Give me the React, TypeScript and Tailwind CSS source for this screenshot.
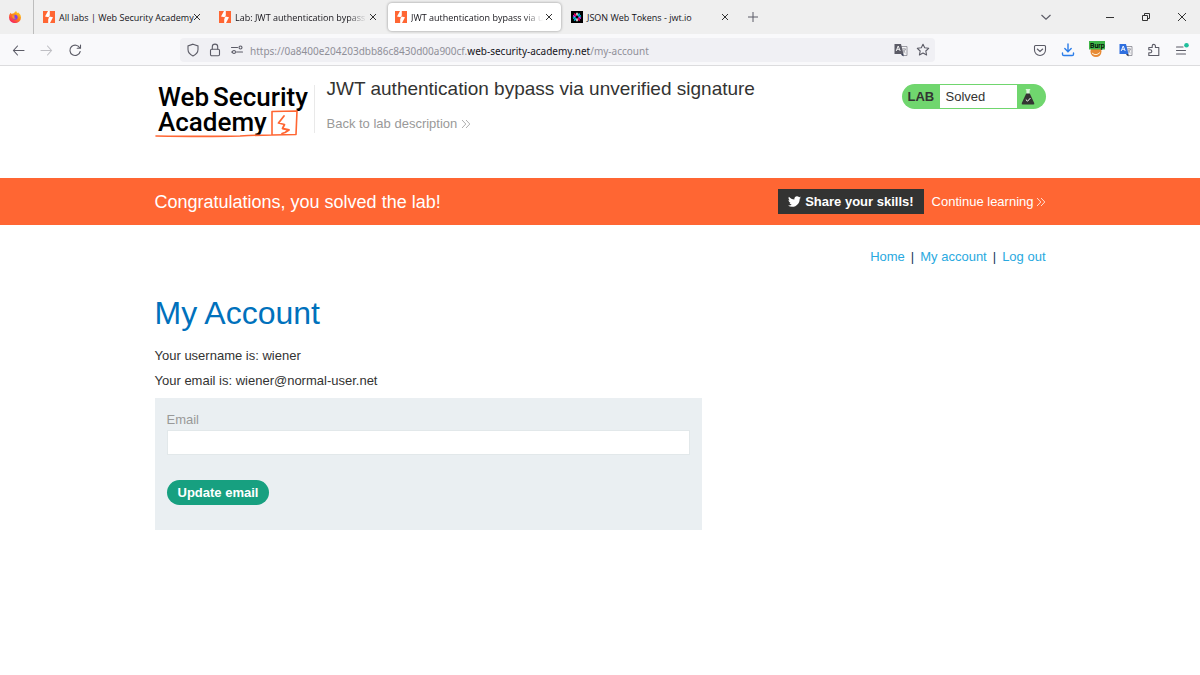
import { useState, type ReactNode } from "react";
import { FaTwitter } from "react-icons/fa";

type Tab = {
  title: string;
  icon: "lab" | "jwt";
  active?: boolean;
  fade?: boolean;
};

const TABS: Tab[] = [
  { title: "All labs | Web Security Academy", icon: "lab" },
  { title: "Lab: JWT authentication bypass", icon: "lab", fade: true },
  { title: "JWT authentication bypass via u", icon: "lab", active: true, fade: true },
  { title: "JSON Web Tokens - jwt.io", icon: "jwt" },
];

const ACCOUNT_LINKS = ["Home", "My account", "Log out"];

export default function App() {
  return (
    <div className="min-h-screen bg-white font-['Liberation_Sans',Arial,sans-serif] text-[13px] leading-5 text-[#333332]">
      <BrowserChrome />
      <LabHeader />
      <SolvedBanner />
      <AccountPage />
    </div>
  );
}

function BrowserChrome() {
  return (
    <header className="font-['Open_Sans','Noto_Sans',sans-serif] text-[#5b5b66]">
      <div className="flex h-[34px] items-stretch bg-[#efefef]">
        <div className="flex w-[34px] shrink-0 items-center justify-center border-r border-[#bdbdbd] pr-1">
          <FirefoxIcon />
        </div>
        {TABS.map((tab) => (
          <BrowserTab key={tab.title} tab={tab} />
        ))}
        <ChromeButton label="New tab" className="ml-[9px]">
          <path d="M6 1v10M1 6h10" />
        </ChromeButton>
        <div className="ml-auto flex items-center gap-6 pr-3">
          <ChromeButton label="List all tabs" className="mr-7">
            <path d="M1.500 4 6 8.200 10.500 4" strokeWidth="1.200" />
          </ChromeButton>
          <ChromeButton label="Minimize">
            <path d="M2 6.500h8" stroke="#333" />
          </ChromeButton>
          <ChromeButton label="Restore">
            <path d="M2.500 4.500h5v5h-5zM4.500 4.500v-2h5v5h-2" stroke="#333" />
          </ChromeButton>
          <ChromeButton label="Close window">
            <path d="m2 2 8 8M10 2l-8 8" stroke="#333" />
          </ChromeButton>
        </div>
      </div>

      <div className="flex h-8 items-center border-b border-[#dcdcde] bg-[#f9f9fb] pr-[11px] pl-3">
        <div className="flex w-[168px] shrink-0 items-center gap-3.5">
          <ToolButton label="Back">
            <path d="M12 7.500H1.500M5.500 3 1.500 7.500l4 4.500" />
          </ToolButton>
          <ToolButton label="Forward">
            <path d="M1 7.500h10.500M7.500 3l4 4.500-4 4.500" stroke="#bfbfc4" />
          </ToolButton>
          <ToolButton label="Reload">
            <path d="M11.800 5A5.200 5.200 0 1 0 12.200 8.500M12.500 2v3.300H9.200" />
          </ToolButton>
        </div>
        <div className="flex h-6 min-w-0 flex-1 items-center rounded bg-[#f0f0f4] pr-[5px] pl-1.5">
          <div className="flex shrink-0 gap-2">
            <ToolButton label="Tracking protection">
              <path d="M7 1.200 12 3v3.500c0 3-2 5-5 6.500-3-1.500-5-3.500-5-6.500V3z" />
            </ToolButton>
            <ToolButton label="Connection secure">
              <rect x="2.500" y="6.200" width="9" height="6.500" rx="1.200" />
              <path d="M4.300 6V3.800a2.700 2.700 0 0 1 5.400 0V6" />
            </ToolButton>
            <ToolButton label="Permissions">
              <path d="M1.500 4.500h6M6.500 9h6M1.500 9h1" />
              <circle cx="10.500" cy="4.500" r="1.500" />
              <circle cx="4" cy="9" r="1.500" />
            </ToolButton>
          </div>
          <p className="mt-0.5 ml-1.5 flex-1 truncate font-['Noto_Sans','Open_Sans',sans-serif] text-[10px] leading-4 text-[#8f8f98]">
            https://0a8400e204203dbb86c8430d00a900cf.
            <span className="text-[#15141a]">web-security-academy.net</span>/my-account
          </p>
          <div className="flex shrink-0 gap-2">
            <button aria-label="Translate page">
              <TranslateIcon color="#5b5b66" />
            </button>
            <ToolButton label="Bookmark">
              <path
                d="m7 1.200 1.700 3.600 4 .5-2.900 2.700.8 4L7 10.100 3.400 12l.8-4-2.900-2.700 4-.5z"
                strokeLinejoin="round"
              />
            </ToolButton>
          </div>
        </div>
        <div className="ml-[98px] flex shrink-0 items-center gap-3.5">
          <ToolButton label="Save to Pocket">
            <path d="M2.500 2.500h9a1 1 0 0 1 1 1V7a5.500 5.500 0 0 1-11 0V3.500a1 1 0 0 1 1-1zM4.300 6 7 8.500 9.700 6" />
          </ToolButton>
          <ToolButton label="Downloads">
            <path
              d="M7 1v7.500M3.800 5.600 7 8.800l3.200-3.200M1.500 10v1.200q0 1.300 1.300 1.300h8.400q1.300 0 1.300-1.300V10"
              stroke="#2b7de9"
              strokeWidth="1.400"
            />
          </ToolButton>
          <button aria-label="Proxy settings">
            <ProxyIcon />
          </button>
          <button aria-label="Translate">
            <TranslateIcon color="#2f6fdf" />
          </button>
          <ToolButton label="Extensions">
            <path
              d="M1.800 12.500V9.800h1.500a1.500 1.500 0 0 0 0-3H1.800V4.500h3.400V3a1.600 1.600 0 0 1 3.200 0v1.500h3.400v8z"
              strokeLinejoin="round"
            />
          </ToolButton>
          <ToolButton label="Open menu">
            <path d="M1.500 4h6.500M1.500 7.500h9M1.500 11h9" />
            <circle cx="11.500" cy="2.300" r="2.300" fill="#1fbf9c" stroke="none" />
          </ToolButton>
        </div>
      </div>
    </header>
  );
}

function BrowserTab({ tab }: { tab: Tab }) {
  return (
    <div className="flex w-44 shrink-0 items-center py-[3px] pr-px pl-0.5">
      <div
        className={`flex h-7 w-full items-center rounded pr-1.5 pl-[7px] ${
          tab.active ? "bg-white shadow-[0_0_3px_rgba(0,0,0,0.4)]" : ""
        }`}
      >
        {tab.icon === "lab" ? <LabFavicon /> : <JwtFavicon />}
        <span
          className={`mt-px ml-1 min-w-0 flex-1 text-[9px] leading-4 whitespace-nowrap text-[#15141a] ${
            tab.fade ? "[mask-image:linear-gradient(to_right,black_85%,transparent)]" : ""
          }`}
        >
          {tab.title}
        </span>
        <ChromeButton label="Close tab">
          <path d="m3 3 6 6M9 3 3 9" stroke="#333" />
        </ChromeButton>
      </div>
    </div>
  );
}

function ChromeButton({ label, className = "", children }: { label: string; className?: string; children: ReactNode }) {
  return (
    <button aria-label={label} className={`shrink-0 ${className}`}>
      <svg className="size-3" viewBox="0 0 12 12" fill="none" stroke="#5b5b66" strokeWidth="1">
        {children}
      </svg>
    </button>
  );
}

function ToolButton({ label, children }: { label: string; children: ReactNode }) {
  return (
    <button aria-label={label} className="shrink-0">
      <svg className="size-3.5" viewBox="0 0 14 14" fill="none" stroke="#5b5b66" strokeWidth="1.100" strokeLinecap="round">
        {children}
      </svg>
    </button>
  );
}

function LabHeader() {
  return (
    <div className="mx-auto flex w-full max-w-[891px] items-start pt-[11px] pb-10">
      <AcademyLogo />
      <div className="mt-2 ml-[3px] h-12 border-l border-[#e9e9e9]" />
      <div className="ml-3">
        <h2 className="text-[19px] leading-6">JWT authentication bypass via unverified signature</h2>
        <a href="#lab" className="mt-[13px] flex items-center gap-1 text-[#999999]">
          Back to lab description
          <DoubleChevron />
        </a>
      </div>
      <div className="mt-[7px] ml-auto flex h-[25px] w-36 overflow-hidden rounded-full bg-[#70d66e]">
        <p className="w-[38px] pl-1.5 leading-[25px] font-bold">LAB</p>
        <p className="my-px flex-1 bg-white pl-1.5 leading-[23px]">Solved</p>
        <div className="flex w-[29px] items-center pl-1">
          <FlaskIcon />
        </div>
      </div>
    </div>
  );
}

function AcademyLogo() {
  return (
    <a href="#academy" aria-label="Web Security Academy" className="mt-1 shrink-0">
      <svg className="h-[57px] w-[156px]" viewBox="0 0 156 57" fill="none">
        <g fill="#000" fontFamily="Roboto, sans-serif" fontSize="26" fontWeight="500">
          <text x="3" y="25">Web</text>
          <text x="58" y="25">Security</text>
          <text x="3" y="50">Academy</text>
        </g>
        <g stroke="#ff6633" strokeLinecap="round" strokeLinejoin="round">
          <path d="M1 55q50 .8 84 0 20-1 32-1V30.500l25-.5-1 23.500-24 .5" strokeWidth="1.600" />
          <path d="m129 35-5.500 7 6 1.500-2 4 6.500 1.500-4 2.500-3 1" strokeWidth="1.800" />
        </g>
      </svg>
    </a>
  );
}

function SolvedBanner() {
  return (
    <section className="bg-[#ff6633] text-white">
      <div className="mx-auto flex h-[47px] w-full max-w-[891px] items-center">
        <h4 className="text-[18px] leading-6">Congratulations, you solved the lab!</h4>
        <button className="ml-auto flex h-[25px] items-center gap-1 bg-[#333332] px-2.5 font-bold">
          <FaTwitter className="size-[13px]" />
          Share your skills!
        </button>
        <a href="#next" className="ml-2 flex items-center gap-0.5">
          Continue learning
          <DoubleChevron />
        </a>
      </div>
    </section>
  );
}

function AccountPage() {
  const [email, setEmail] = useState("");

  return (
    <main className="mx-auto w-full max-w-[891px] pt-[22px]">
      <nav className="flex justify-end">
        {ACCOUNT_LINKS.map((link, i) => (
          <span key={link}>
            {i > 0 && <span className="px-1.5 text-[#1a3a5a]">|</span>}
            <a href="#account" className="text-[#29a9e0]">
              {link}
            </a>
          </span>
        ))}
      </nav>

      <h1 className="mt-[26px] text-[32px] leading-10 text-[#0071bc]">My Account</h1>
      <p className="mt-[13px]">Your username is: wiener</p>
      <p className="mt-[5px]">Your email is: wiener@normal-user.net</p>

      <form
        className="mt-[7px] w-full max-w-[547px] bg-[#eaeff2] px-3 pt-3 pb-[25px]"
        onSubmit={(e) => e.preventDefault()}
      >
        <label htmlFor="email" className="block text-[#999999]">
          Email
        </label>
        <input
          id="email"
          type="email"
          value={email}
          onChange={(e) => setEmail(e.target.value)}
          className="block h-[25px] w-full border border-[#e2e8ea] bg-white px-1.5 outline-none"
        />
        <button className="mt-[25px] h-[25px] rounded-full bg-[#17a080] px-[11px] font-bold text-white">
          Update email
        </button>
      </form>
    </main>
  );
}

function DoubleChevron() {
  return (
    <svg className="h-2.5 w-2.5" viewBox="0 0 10 10" fill="none" stroke="currentColor" strokeWidth="0.800">
      <path d="m1 1 3.800 4L1 9M5 1l3.800 4L5 9" />
    </svg>
  );
}

function FlaskIcon() {
  return (
    <svg className="h-4 w-3.5" viewBox="0 0 14 16" fill="none">
      <path d="M4.800 0h4.400v1.300h-.6V5h-3.200V1.300h-.6z" fill="#d9f5d8" />
      <path d="M5.200 4.500h3.600l4.400 9.500q.6 1.500-1 1.500H1.800q-1.600 0-1-1.500z" fill="#333332" />
      <path d="m4.800 10.500 1.700 1.700 3-3.200" stroke="#fff" />
    </svg>
  );
}

function LabFavicon() {
  return (
    <svg className="size-3 shrink-0" viewBox="0 0 12 12">
      <path d="M0 0h12v12H0z" fill="#ff6633" />
      <path d="M5 0h1.800v4.500L5.500 6.200l-3.500-.7zM6.400 5.600l3.600.7L7 12H5.200V8.200z" fill="#fff" />
    </svg>
  );
}

function JwtFavicon() {
  return (
    <svg className="size-3 shrink-0" viewBox="0 0 12 12" strokeWidth="1.500">
      <path d="M0 0h12v12H0z" fill="#000" />
      <path d="M6 1.800V4.500M6 7.500v2.700" stroke="#fff" />
      <path d="m8.600 2.500-1.700 2.300M5 7.200 3.300 9.600" stroke="#00c8e6" />
      <path d="M10 4.800 7.500 5.600M4.500 6.400 2 7.300" stroke="#00c8e6" />
      <path d="m10 7.300-2.500-.9M4.500 5.600 2 4.800" stroke="#d63aff" />
      <path d="M8.600 9.600 6.900 7.200M5 4.800 3.300 2.500" stroke="#fb015b" />
    </svg>
  );
}

function FirefoxIcon() {
  return (
    <svg className="size-3" viewBox="0 0 12 12">
      <defs>
        <linearGradient id="fox" x1="0.900" y1="0" x2="0.200" y2="1">
          <stop offset="0" stopColor="#ffe226" />
          <stop offset="0.450" stopColor="#ff8a16" />
          <stop offset="1" stopColor="#f5156c" />
        </linearGradient>
      </defs>
      <path d="M1.600 1.800 2.700 3Q4 2 5 2.200 5.600.8 7.200 0q.1 1.400 1.600 2.100L9.500 1.400Q12 3.600 12 6.500A6 5.600 0 0 1 0 6.500Q0 3.500 1.600 1.800z" fill="url(#fox)" />
      <circle cx="6.100" cy="6.200" r="2.500" fill="#7a3ff0" />
      <path d="M3.200 4.500q2-.8 3.200.5l-1.500.8q.5 1.500 2.300 1-1.500 1.800-3.400.4-1-1-.6-2.700z" fill="#ff9a1c" />
    </svg>
  );
}

function TranslateIcon({ color }: { color: string }) {
  return (
    <svg className="size-3.5" viewBox="0 0 14 14">
      <path d="M6.500 3.500H13v9H8z" fill="#f4f4f6" stroke="#85858f" strokeWidth="0.800" />
      <path d="M8 6h4M10 5.200V6M11.500 6q-.8 2.500-3 4M9 7q1 2 2.500 3" stroke="#85858f" strokeWidth="0.700" fill="none" />
      <path d="M.5 1h6.500L9.500 11H.5z" fill={color} />
      <path d="m7 11 2.500 2.500V11z" fill="#333b55" />
      <path d="m2.200 8 2-5 2 5M3 6.300h2.500" stroke="#fff" strokeWidth="0.900" fill="none" />
    </svg>
  );
}

function ProxyIcon() {
  return (
    <svg className="h-[18px] w-4" viewBox="0 0 16 18">
      <circle cx="7" cy="10.500" r="5.500" fill="#e88a35" />
      <path d="M3 12q4 3.500 8-.5" stroke="#fff1d8" fill="none" />
      <path d="M0 0h16v8.500H0z" fill="#3fb54a" />
      <text x="1" y="7" fill="#000" fontSize="7" fontWeight="500" fontFamily="Roboto, sans-serif">
        Burp
      </text>
    </svg>
  );
}
